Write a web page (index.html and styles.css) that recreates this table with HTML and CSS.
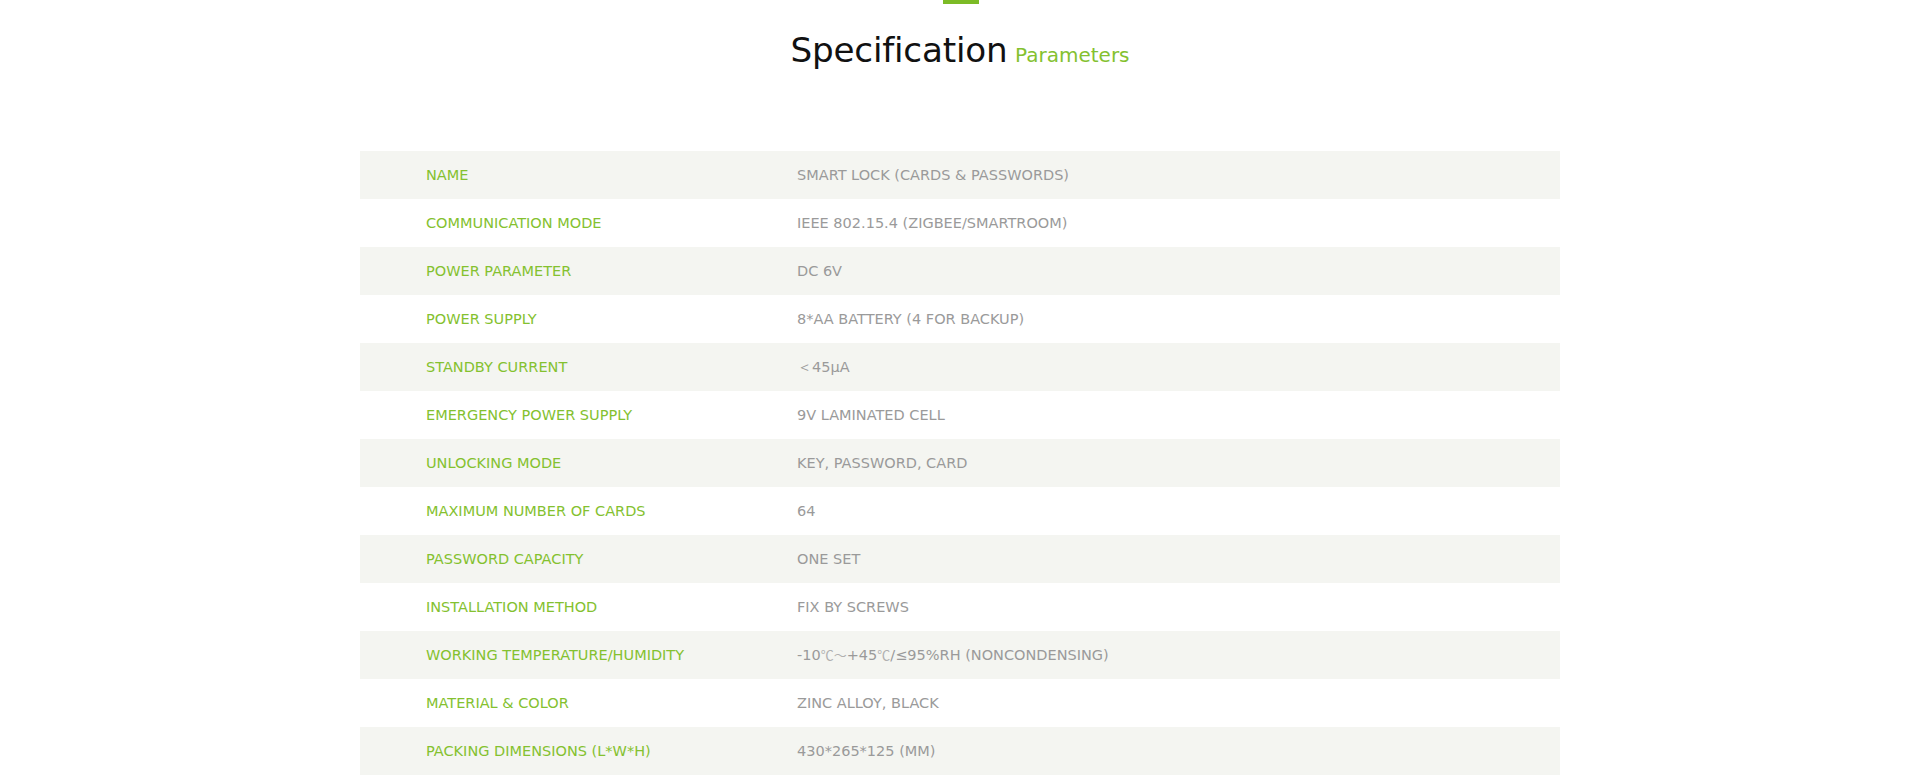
FILE: index.html
```html
<!DOCTYPE html>
<html lang="en">
<head>
<meta charset="utf-8">
<title>Specification Parameters</title>
<link rel="stylesheet" href="styles.css">
</head>
<body>
<section class="spec">
  <div class="bar"></div>
  <h2 class="title">Specification <span class="sub">Parameters</span></h2>
  <div class="table">
    <div class="row"><div class="label">NAME</div><div class="value">SMART LOCK (CARDS &amp; PASSWORDS)</div></div>
    <div class="row"><div class="label">COMMUNICATION MODE</div><div class="value">IEEE 802.15.4 (ZIGBEE/SMARTROOM)</div></div>
    <div class="row"><div class="label">POWER PARAMETER</div><div class="value">DC 6V</div></div>
    <div class="row"><div class="label">POWER SUPPLY</div><div class="value">8*AA BATTERY (4 FOR BACKUP)</div></div>
    <div class="row"><div class="label">STANDBY CURRENT</div><div class="value">＜45μA</div></div>
    <div class="row"><div class="label">EMERGENCY POWER SUPPLY</div><div class="value">9V LAMINATED CELL</div></div>
    <div class="row"><div class="label">UNLOCKING MODE</div><div class="value">KEY, PASSWORD, CARD</div></div>
    <div class="row"><div class="label">MAXIMUM NUMBER OF CARDS</div><div class="value">64</div></div>
    <div class="row"><div class="label">PASSWORD CAPACITY</div><div class="value">ONE SET</div></div>
    <div class="row"><div class="label">INSTALLATION METHOD</div><div class="value">FIX BY SCREWS</div></div>
    <div class="row"><div class="label">WORKING TEMPERATURE/HUMIDITY</div><div class="value">-10<span class="cjk">℃～</span>+45<span class="cjk">℃</span>/≤95%RH (NONCONDENSING)</div></div>
    <div class="row"><div class="label">MATERIAL &amp; COLOR</div><div class="value">ZINC ALLOY, BLACK</div></div>
    <div class="row"><div class="label">PACKING DIMENSIONS (L*W*H)</div><div class="value">430*265*125 (MM)</div></div>
  </div>
</section>
</body>
</html>
```
FILE: styles.css
```css
html, body {
  margin: 0;
  padding: 0;
  background: #ffffff;
}

body {
  font-family: "DejaVu Sans", Verdana, sans-serif;
}

.spec {
  display: flex;
  flex-direction: column;
  align-items: center;
}

.bar {
  width: 36px;
  height: 4px;
  background: #7cbb26;
  margin-left: 2px;
}

.title {
  margin: 26px 0 0 0;
  font-weight: normal;
  font-size: 34.2px;
  line-height: 40px;
  color: #111111;
  letter-spacing: -0.2px;
  word-spacing: -3px;
}

.title .sub {
  font-size: 20px;
  line-height: 20px;
  color: #84c12f;
  letter-spacing: 0;
}

.table {
  width: 1200px;
  margin-top: 81px;
  display: flex;
  flex-direction: column;
}

.row {
  display: grid;
  grid-template-columns: 371px 1fr;
  padding: 0 66px;
  height: 48px;
  line-height: 48px;
  font-size: 14.5px;
}

.row:nth-child(odd) {
  background: #f4f5f1;
}

.label {
  color: #84c12f;
  white-space: nowrap;
}

.value {
  color: #9a9a9a;
  white-space: nowrap;
}

.cjk {
  font-family: "Noto Sans CJK SC", sans-serif;
  color: #b0b0b0;
  font-size: 13px;
}
```
